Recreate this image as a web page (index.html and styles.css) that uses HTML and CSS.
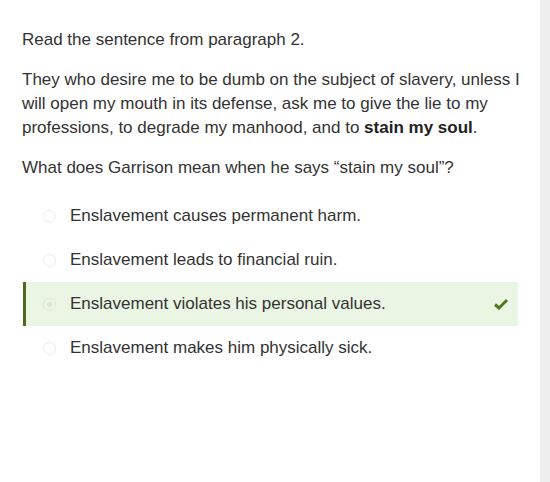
FILE: index.html
```html
<!DOCTYPE html>
<html>
<head>
<meta charset="utf-8">
<link rel="stylesheet" href="styles.css">
</head>
<body>
<div class="page">
  <main class="content">
    <p class="para">Read the sentence from paragraph 2.</p>
    <p class="para">They who desire me to be dumb on the subject of slavery, unless I will open my mouth in its defense, ask me to give the lie to my professions, to degrade my manhood, and to <strong>stain my soul</strong>.</p>
    <p class="para question">What does Garrison mean when he says “stain my soul”?</p>
    <ul class="options">
      <li class="option"><span class="radio"></span><span class="label">Enslavement causes permanent harm.</span></li>
      <li class="option"><span class="radio"></span><span class="label">Enslavement leads to financial ruin.</span></li>
      <li class="option selected"><span class="radio checked"></span><span class="label">Enslavement violates his personal values.</span>
        <svg class="check" width="14" height="12" viewBox="0 0 14 12"><path d="M1 6.5 L5 10 L13 2" fill="none" stroke="#4f7a1f" stroke-width="3" stroke-linejoin="miter"/></svg>
      </li>
      <li class="option"><span class="radio"></span><span class="label">Enslavement makes him physically sick.</span></li>
    </ul>
  </main>
  <div class="strip"></div>
</div>
</body>
</html>
```

FILE: styles.css
```css
html, body {
  margin: 0;
  padding: 0;
  height: 100%;
  background: #fff;
}
.page {
  display: flex;
  height: 482px;
}
.content {
  flex: 1;
  padding: 28px 0 0 22px;
  font-family: "Liberation Sans", Arial, sans-serif;
  font-size: 17px;
  line-height: 24px;
  color: #333;
}
.para {
  margin: 0 0 16px 0;
  width: 500px;
}
.para.question {
  margin-bottom: 14px;
}
.para strong {
  font-weight: bold;
  color: #222;
}
.options {
  list-style: none;
  margin: 0;
  padding: 0;
  width: 496px;
}
.option {
  display: flex;
  align-items: center;
  height: 44px;
  padding-left: 17px;
  margin-left: 1px;
  border-left: 3px solid transparent;
}
.option.selected {
  background: #ebf5e3;
  border-left-color: #4b6a1c;
}
.radio {
  width: 11px;
  height: 11px;
  border: 1px solid #ececec;
  border-radius: 50%;
  margin-right: 14px;
  position: relative;
  flex: none;
}
.radio.checked {
  border-color: #dfe6da;
}
.radio.checked::after {
  content: "";
  position: absolute;
  left: 3px;
  top: 3px;
  width: 5px;
  height: 5px;
  border-radius: 50%;
  background: #dde4d8;
}
.label {
  flex: 1;
}
.check {
  margin-right: 10px;
}
.strip {
  width: 10px;
  background: #eeeeee;
}
```
